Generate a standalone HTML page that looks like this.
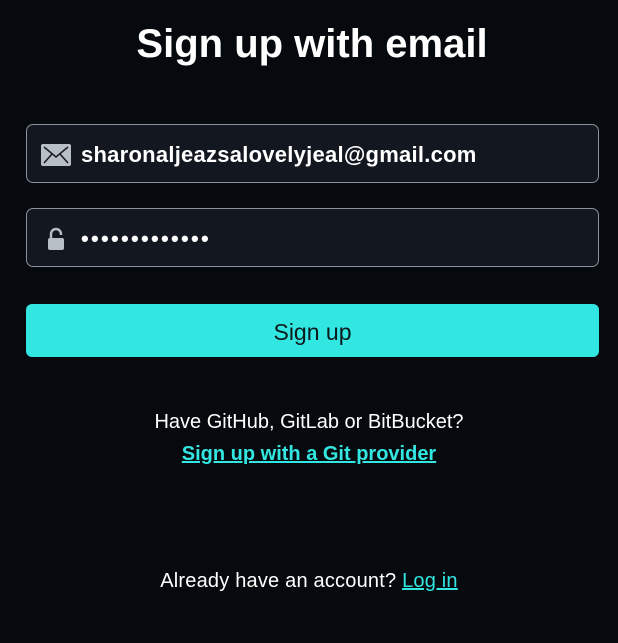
<!DOCTYPE html>
<html><head><style>
html,body{margin:0;padding:0;background:#06090d;width:618px;height:643px;overflow:hidden;font-family:"Liberation Sans",sans-serif;color:#fff}
h1{position:absolute;top:19px;left:3px;width:618px;text-align:center;margin:0;font-size:40px;font-weight:bold;line-height:50px}
.inp{position:absolute;left:26px;width:571px;height:57px;background:#121720;border:1px solid #8b929b;border-radius:7px}
.inp .t{position:absolute;left:54px;top:1px;line-height:57px;font-size:22px;font-weight:bold}
.btn{position:absolute;left:26px;top:304px;width:573px;height:53px;background:#32e6e2;border-radius:6px;color:#0c1a1c;font-size:23px;text-align:center;line-height:56px}
.c{position:absolute;left:0;width:618px;text-align:center;font-size:20px}
a{color:#32e6e2;text-decoration:underline}
</style></head><body>
<h1>Sign up with email</h1>
<div class="inp" style="top:124px">
<svg style="position:absolute;left:14px;top:19px" width="30" height="22" viewBox="0 0 30 22"><rect x="0" y="0" width="30" height="22" rx="2" fill="#b8bec6"/><path d="M3 3 L15 13 L27 3 M3 19 L11 10 M27 19 L19 10" stroke="#1a1f27" stroke-width="1.6" fill="none"/></svg>
<div class="t" style="letter-spacing:0.25px">sharonaljeazsalovelyjeal@gmail.com</div></div>
<div class="inp" style="top:208px">
<svg style="position:absolute;left:20px;top:18px" width="18" height="24" viewBox="0 0 18 24"><path d="M4 11 V7 a5 5 0 0 1 10 0 V8" stroke="#b8bec6" stroke-width="2.4" fill="none"/><rect x="1" y="11" width="16" height="12" rx="2" fill="#b8bec6"/></svg>
<div class="t" style="letter-spacing:2.3px;font-size:22px">•••••••••••••</div></div>
<div class="btn">Sign up</div>
<div class="c" style="top:411px">Have GitHub, GitLab or BitBucket?</div>
<div class="c" style="top:443px;font-weight:bold"><a>Sign up with a Git provider</a></div>
<div class="c" style="top:570px;letter-spacing:0.2px">Already have an account? <a>Log in</a></div>
</body></html>
